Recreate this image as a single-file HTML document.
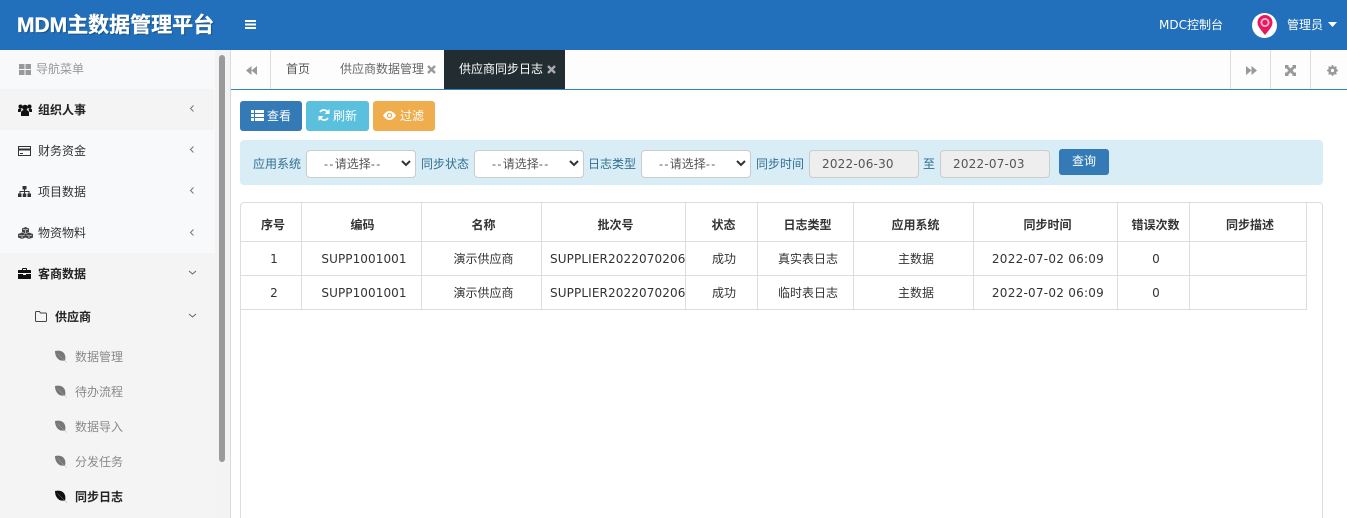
<!DOCTYPE html>
<html lang="zh">
<head>
<meta charset="utf-8">
<title>MDM主数据管理平台</title>
<style>
html,body{margin:0;padding:0;width:1347px;height:518px;overflow:hidden;background:#fff;}
body{position:relative;font-family:"Liberation Sans","Noto Sans CJK SC",sans-serif;font-size:12px;color:#333;}
.a{position:absolute;white-space:nowrap;}
svg{position:absolute;display:block;}
.t{position:absolute;white-space:nowrap;line-height:16px;}
.c{position:absolute;white-space:nowrap;text-align:center;line-height:16px;}
.sel{position:absolute;top:150px;height:26px;background:#fff;border:1px solid #ccc;border-radius:4px;color:#555;line-height:26px;}
.sel i{font-style:normal;letter-spacing:1.4px;}
.lab{position:absolute;top:156px;color:#31708f;line-height:16px;white-space:nowrap;}
.inp{position:absolute;top:150px;height:26px;width:108px;background:#eee;border:1px solid #ccc;border-radius:4px;color:#555;line-height:26px;font-family:"DejaVu Sans",sans-serif;font-size:12px;letter-spacing:.2px;}
.btn{position:absolute;top:101px;height:28px;border-radius:3px;color:#fff;line-height:28px;}
.d{font-family:"DejaVu Sans","Noto Sans CJK SC",sans-serif;}
.v{position:absolute;background:#ddd;width:1px;top:203px;height:106px;}
.h{position:absolute;background:#ddd;height:1px;left:241px;width:1066px;}
.th{font-weight:bold;top:217px;color:#333;}
</style>
</head>
<body>
<!-- top bar -->
<div class="a" style="left:0;top:0;width:1347px;height:50px;background:#2270bb;"></div>
<div class="a" style="left:17px;top:13px;font-size:21px;line-height:26px;font-weight:bold;color:#fff;-webkit-text-stroke:.3px #fff;text-shadow:1px 1px 1px rgba(0,0,0,.35);">MDM主数据管理平台</div>
<svg style="left:245px;top:19px" width="11" height="11"><path d="M0 1h11v2H0zM0 4.500h11v2H0zM0 8h11v2H0z" fill="#fff"/></svg>
<div class="a d" style="left:1159px;top:17px;color:#fff;line-height:16px;font-size:12px;">MDC控制台</div>
<div class="a" style="left:1252px;top:13px;width:25px;height:25px;border-radius:50%;background:#fff;"></div>
<svg style="left:1256px;top:14px" width="18" height="22" viewBox="0 0 18 22"><path d="M9 21C5 16 1.500 12.500 1.500 8.500a7.500 7.500 0 0 1 15 0C16.500 12.500 13 16 9 21z" fill="#e6185f"/><circle cx="9" cy="8.500" r="4.500" fill="#f7b7cc"/><circle cx="9" cy="8.500" r="2.700" fill="#e6185f"/></svg>
<div class="a" style="left:1287px;top:17px;color:#fff;line-height:16px;">管理员</div>
<svg style="left:1328px;top:22px" width="9" height="6"><path d="M0 0h9L4.500 5z" fill="#fff"/></svg>

<!-- sidebar -->
<div class="a" style="left:0;top:50px;width:215px;height:468px;background:#f8f9fb;"></div>
<div class="a" style="left:0;top:89px;width:214px;height:41px;background:#f4f4f4;"></div>
<div class="a" style="left:0;top:253px;width:215px;height:265px;background:#f4f4f4;"></div>
<div class="a" style="left:215px;top:50px;width:15px;height:468px;background:#f3f3f3;"></div>
<div class="a" style="left:219px;top:55px;width:6px;height:407px;background:#9a9a9a;border-radius:3px;"></div>
<div class="a" style="left:230px;top:50px;width:1px;height:468px;background:#d8dce0;"></div>

<svg style="left:19px;top:64px" width="12" height="11"><path d="M0 0h5.500v5H0zM6.500 0H12v5H6.500zM0 6h5.500v5H0zM6.500 6H12v5H6.500z" fill="#999"/></svg>
<div class="t" style="left:36px;top:61px;color:#999;">导航菜单</div>

<svg style="left:18px;top:104px" width="14" height="12" viewBox="0 0 14 12"><circle cx="7" cy="3.500" r="2.800" fill="#111"/><circle cx="2.500" cy="2.500" r="2" fill="#111"/><circle cx="11.500" cy="2.500" r="2" fill="#111"/><path d="M3 12V8.500q0-2.500 4-2.500t4 2.500V12zM0 8V6q0-1.500 2-1.500l1.500.5-1 3zM14 8V6q0-1.500-2-1.500L10.500 5l1 3z" fill="#111"/></svg>
<div class="t" style="left:38px;top:102px;color:#222;font-weight:bold;">组织人事</div>
<svg style="left:18px;top:146px" width="13" height="10"><path d="M.5.500h12v9H.5z" fill="none" stroke="#333"/><path d="M0 2.500h13v2H0z" fill="#333"/><path d="M2 7h3v1H2z" fill="#333"/></svg>
<div class="t" style="left:38px;top:143px;color:#333;">财务资金</div>
<svg style="left:18px;top:186px" width="13" height="11"><path d="M4.500 0h4v3.500h-4zM0 7.500h3.500V11H0zM4.750 7.500h3.500V11h-3.500zM9.500 7.500H13V11H9.500zM6 3h1v2h4.500v3h-1V6H7v2H6V6H2.500v2h-1V5H6z" fill="#333"/></svg>
<div class="t" style="left:38px;top:184px;color:#333;">项目数据</div>
<svg style="left:18px;top:227px" width="15" height="12" viewBox="0 0 15 12"><path d="M7.500 0l3.500 1.500v3.500l-3.500 1.500L4 5V1.500zM4 5.500l3.500 1.500v3.500L4 12 0 10.500V7zM11 5.500L15 7v3.500L11 12l-3.500-1.500V7z" fill="#444"/><path d="M5 2l2.500 1L10 2M1 8l3 1 3-1M8.500 8l2.500 1 3-1M7.500 3v3M4 9v2.500M11 9v2.500" fill="none" stroke="#f8f9fb" stroke-width=".6"/></svg>
<div class="t" style="left:38px;top:225px;color:#333;">物资物料</div>
<svg style="left:18px;top:268px" width="13" height="11"><path d="M4 2V.800Q4 0 5 0h3q1 0 1 .8V2h3.500q.5 0 .5.500V5H0V2.500Q0 2 .5 2zM5 1v1h3V1zM0 6h5v1h3V6h5v4.500q0 .5-.5.500H.5q-.5 0-.5-.500z" fill="#111"/></svg>
<div class="t" style="left:38px;top:266px;color:#222;font-weight:bold;">客商数据</div>

<svg style="left:189px;top:104px" width="6" height="9"><path d="M4.500 1.500L1.500 4.500 4.500 7.500" fill="none" stroke="#777"/></svg>
<svg style="left:189px;top:145px" width="6" height="9"><path d="M4.500 1.500L1.500 4.500 4.500 7.500" fill="none" stroke="#777"/></svg>
<svg style="left:189px;top:186px" width="6" height="9"><path d="M4.500 1.500L1.500 4.500 4.500 7.500" fill="none" stroke="#777"/></svg>
<svg style="left:189px;top:228px" width="6" height="9"><path d="M4.500 1.500L1.500 4.500 4.500 7.500" fill="none" stroke="#777"/></svg>
<svg style="left:188px;top:270px" width="9" height="6"><path d="M1 1l3.500 3L8 1" fill="none" stroke="#666"/></svg>
<svg style="left:188px;top:313px" width="9" height="6"><path d="M1 1l3.500 3L8 1" fill="none" stroke="#666"/></svg>

<svg style="left:35px;top:311px" width="12" height="11"><path d="M.5 9.500v-8q0-1 1-1h3l1 1.500h5q1 0 1 1v6.500q0 1-1 1h-9q-1 0-1-1z" fill="none" stroke="#444"/></svg>
<div class="t" style="left:55px;top:309px;color:#222;font-weight:bold;">供应商</div>

<svg style="left:55px;top:350px" width="13" height="13" viewBox="0 0 13 13"><path d="M0 1q7-1.500 9.500 3 1.500 3 .5 6.500Q4 11.500 1.500 7 0 4.500 0 1z" fill="#777"/><path d="M2.500 3.500L9 10l3 2.500" fill="none" stroke="#aaa" stroke-width=".5"/></svg>
<div class="t" style="left:75px;top:349px;color:#8a8a8a;">数据管理</div>
<svg style="left:55px;top:385px" width="13" height="13" viewBox="0 0 13 13"><path d="M0 1q7-1.500 9.500 3 1.500 3 .5 6.500Q4 11.500 1.500 7 0 4.500 0 1z" fill="#777"/><path d="M2.500 3.500L9 10l3 2.500" fill="none" stroke="#aaa" stroke-width=".5"/></svg>
<div class="t" style="left:75px;top:384px;color:#8a8a8a;">待办流程</div>
<svg style="left:55px;top:420px" width="13" height="13" viewBox="0 0 13 13"><path d="M0 1q7-1.500 9.500 3 1.500 3 .5 6.500Q4 11.500 1.500 7 0 4.500 0 1z" fill="#777"/><path d="M2.500 3.500L9 10l3 2.500" fill="none" stroke="#aaa" stroke-width=".5"/></svg>
<div class="t" style="left:75px;top:419px;color:#8a8a8a;">数据导入</div>
<svg style="left:55px;top:455px" width="13" height="13" viewBox="0 0 13 13"><path d="M0 1q7-1.500 9.500 3 1.500 3 .5 6.500Q4 11.500 1.500 7 0 4.500 0 1z" fill="#777"/><path d="M2.500 3.500L9 10l3 2.500" fill="none" stroke="#aaa" stroke-width=".5"/></svg>
<div class="t" style="left:75px;top:454px;color:#8a8a8a;">分发任务</div>
<svg style="left:55px;top:490px" width="13" height="13" viewBox="0 0 13 13"><path d="M0 1q7-1.500 9.500 3 1.500 3 .5 6.500Q4 11.500 1.500 7 0 4.500 0 1z" fill="#111"/><path d="M2.500 3.500L9 10l3 2.500" fill="none" stroke="#888" stroke-width=".5"/></svg>
<div class="t" style="left:75px;top:489px;color:#222;font-weight:bold;">同步日志</div>

<!-- tab bar -->
<div class="a" style="left:231px;top:50px;width:1116px;height:39px;background:#fdfdfd;"></div>
<div class="a" style="left:231px;top:89px;width:1116px;height:1px;background:#2e86c1;"></div>
<div class="a" style="left:270px;top:50px;width:1px;height:39px;background:#ddd;"></div>
<svg style="left:246px;top:66px" width="11" height="9"><path d="M5.500 0v9L0 4.500zM11 0v9L5.500 4.500z" fill="#999"/></svg>
<div class="t" style="left:286px;top:61px;color:#555;">首页</div>
<div class="t" style="left:340px;top:61px;color:#666;">供应商数据管理</div>
<svg style="left:427px;top:65px" width="9" height="9"><path d="M1 1l7 7M8 1L1 8" stroke="#999" stroke-width="2.400"/></svg>
<div class="a" style="left:444px;top:50px;width:121px;height:39px;background:#222d32;"></div>
<div class="t" style="left:459px;top:61px;color:#fff;">供应商同步日志</div>
<svg style="left:547px;top:65px" width="9" height="9"><path d="M1 1l7 7M8 1L1 8" stroke="#aaa" stroke-width="2.400"/></svg>
<div class="a" style="left:1230px;top:50px;width:1px;height:39px;background:#ddd;"></div>
<div class="a" style="left:1270px;top:50px;width:1px;height:39px;background:#ddd;"></div>
<div class="a" style="left:1310px;top:50px;width:1px;height:39px;background:#ddd;"></div>
<svg style="left:1246px;top:66px" width="11" height="9"><path d="M0 0v9l5.500-4.500zM5.500 0v9L11 4.500z" fill="#999"/></svg>
<svg style="left:1285px;top:65px" width="11" height="11"><path d="M0 0h4L3 1l2.500 2.500L8 1 7 0h4v4l-1-1-2.500 2.500L10 8l1-1v4H7l1-1-2.500-2.500L3 10l1 1H0V7l1 1 2.500-2.500L1 3 0 4z" fill="#999"/></svg>
<svg style="left:1327px;top:65px" width="11" height="11" viewBox="0 0 11 11"><circle cx="5.500" cy="5.500" r="3.300" fill="none" stroke="#999" stroke-width="2.200"/><path d="M5.500 0v11M0 5.500h11M1.600 1.600l7.800 7.800M9.400 1.600L1.600 9.400" stroke="#999" stroke-width="1.500"/><circle cx="5.500" cy="5.500" r="1.600" fill="#fff"/></svg>

<!-- buttons -->
<div class="btn" style="left:240px;width:62px;height:30px;background:#337ab7;border:0;top:101px;"></div>
<svg style="left:251px;top:110px" width="13" height="11"><path d="M0 0h3v3H0zM4 0h9v3H4zM0 4h3v3H0zM4 4h9v3H4zM0 8h3v3H0zM4 8h9v3H4z" fill="#fff"/></svg>
<div class="t" style="left:267px;top:108px;color:#fff;">查看</div>
<div class="btn" style="left:306px;width:63px;height:30px;background:#5bc0de;"></div>
<svg style="left:318px;top:109px" width="12" height="12" viewBox="0 0 12 12"><path d="M10.500 4.500A4.800 4.800 0 0 0 2 3M1.500 7.500A4.800 4.800 0 0 0 10 9" fill="none" stroke="#fff" stroke-width="1.800"/><path d="M11.500 0v5h-5zM.5 12V7h5z" fill="#fff"/></svg>
<div class="t" style="left:333px;top:108px;color:#fff;">刷新</div>
<div class="btn" style="left:373px;width:62px;height:30px;background:#f0ad4e;"></div>
<svg style="left:383px;top:111px" width="13" height="9" viewBox="0 0 13 9"><path d="M0 4.500Q3 0 6.500 0T13 4.500Q10 9 6.500 9T0 4.500z" fill="#fff"/><circle cx="6.500" cy="4.500" r="2.700" fill="#f0ad4e"/><circle cx="6.500" cy="4.500" r="1.500" fill="#fff"/></svg>
<div class="t" style="left:400px;top:108px;color:#fff;">过滤</div>

<!-- filter -->
<div class="a" style="left:240px;top:140px;width:1083px;height:45px;background:#d9edf7;border-radius:4px;"></div>
<div class="lab" style="left:253px;">应用系统</div>
<div class="sel" style="left:306px;width:108px;"><span style="margin-left:17px;"><i>--</i>请选择<i>--</i></span></div>
<svg style="left:401px;top:160px" width="10" height="7"><path d="M1 1l4 4 4-4" fill="none" stroke="#333" stroke-width="2"/></svg>
<div class="lab" style="left:421px;">同步状态</div>
<div class="sel" style="left:474px;width:108px;"><span style="margin-left:17px;"><i>--</i>请选择<i>--</i></span></div>
<svg style="left:569px;top:160px" width="10" height="7"><path d="M1 1l4 4 4-4" fill="none" stroke="#333" stroke-width="2"/></svg>
<div class="lab" style="left:588px;">日志类型</div>
<div class="sel" style="left:641px;width:108px;"><span style="margin-left:17px;"><i>--</i>请选择<i>--</i></span></div>
<svg style="left:736px;top:160px" width="10" height="7"><path d="M1 1l4 4 4-4" fill="none" stroke="#333" stroke-width="2"/></svg>
<div class="lab" style="left:756px;">同步时间</div>
<div class="inp" style="left:809px;"><span style="margin-left:12px;">2022-06-30</span></div>
<div class="lab" style="left:923px;">至</div>
<div class="inp" style="left:940px;"><span style="margin-left:12px;">2022-07-03</span></div>
<div class="a" style="left:1059px;top:149px;width:50px;height:26px;background:#337ab7;border-radius:3px;color:#fff;text-align:center;line-height:24px;">查询</div>

<!-- table -->
<div class="a" style="left:240px;top:202px;width:1081px;height:330px;border:1px solid #ddd;border-radius:4px;"></div>
<div class="h" style="top:241px;"></div>
<div class="h" style="top:275px;"></div>
<div class="h" style="top:309px;"></div>
<div class="v" style="left:301px;"></div>
<div class="v" style="left:421px;"></div>
<div class="v" style="left:541px;"></div>
<div class="v" style="left:685px;"></div>
<div class="v" style="left:757px;"></div>
<div class="v" style="left:853px;"></div>
<div class="v" style="left:973px;"></div>
<div class="v" style="left:1117px;"></div>
<div class="v" style="left:1189px;"></div>
<div class="v" style="left:1306px;"></div>

<div class="c th" style="left:243px;width:60px;">序号</div>
<div class="c th" style="left:303px;width:119px;">编码</div>
<div class="c th" style="left:424px;width:119px;">名称</div>
<div class="c th" style="left:544px;width:143px;">批次号</div>
<div class="c th" style="left:688px;width:71px;">状态</div>
<div class="c th" style="left:760px;width:95px;">日志类型</div>
<div class="c th" style="left:856px;width:119px;">应用系统</div>
<div class="c th" style="left:976px;width:143px;">同步时间</div>
<div class="c th" style="left:1120px;width:71px;">错误次数</div>
<div class="c th" style="left:1192px;width:116px;">同步描述</div>

<div class="c d" style="left:241px;width:66px;top:251px;">1</div>
<div class="c d" style="left:302px;top:251px;width:124px;letter-spacing:.08px;">SUPP1001001</div>
<div class="c" style="left:424px;width:119px;top:251px;">演示供应商</div>
<div class="a d" style="left:542px;width:143px;top:251px;line-height:16px;overflow:hidden;padding-left:8px;box-sizing:border-box;letter-spacing:.12px;">SUPPLIER2022070206</div>
<div class="c" style="left:686px;width:76px;top:251px;">成功</div>
<div class="c" style="left:758px;width:100px;top:251px;">真实表日志</div>
<div class="c" style="left:854px;width:124px;top:251px;">主数据</div>
<div class="c d" style="left:974px;width:148px;top:251px;letter-spacing:.25px;">2022-07-02 06:09</div>
<div class="c d" style="left:1118px;width:76px;top:251px;">0</div>

<div class="c d" style="left:241px;width:66px;top:285px;">2</div>
<div class="c d" style="left:302px;width:124px;top:285px;letter-spacing:.08px;">SUPP1001001</div>
<div class="c" style="left:424px;width:119px;top:285px;">演示供应商</div>
<div class="a d" style="left:542px;width:143px;top:285px;line-height:16px;overflow:hidden;padding-left:8px;box-sizing:border-box;letter-spacing:.12px;">SUPPLIER2022070206</div>
<div class="c" style="left:686px;width:76px;top:285px;">成功</div>
<div class="c" style="left:758px;width:100px;top:285px;">临时表日志</div>
<div class="c" style="left:854px;width:124px;top:285px;">主数据</div>
<div class="c d" style="left:974px;width:148px;top:285px;letter-spacing:.25px;">2022-07-02 06:09</div>
<div class="c d" style="left:1118px;width:76px;top:285px;">0</div>
</body>
</html>
